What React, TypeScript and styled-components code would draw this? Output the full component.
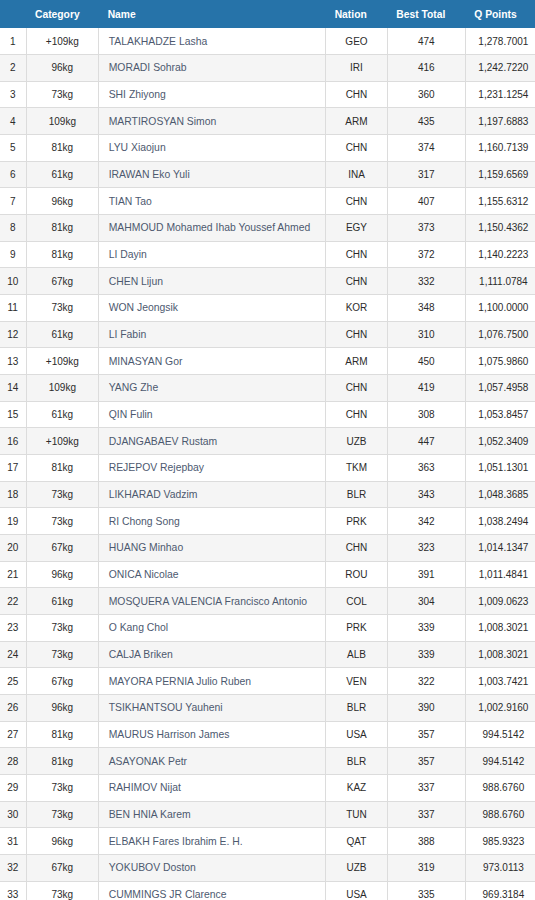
import React from "react";
import styled, { createGlobalStyle } from "styled-components";

const Global = createGlobalStyle`
  html, body { margin: 0; padding: 0; overflow: hidden; background: #fff; }
  body { font-family: "Liberation Sans", Arial, sans-serif; }
`;

const Frame = styled.div`
  width: 535px;
  height: 900px;
  overflow: hidden;
`;

const Table = styled.table`
  width: 541px;
  table-layout: fixed;
  border-collapse: collapse;
  border-spacing: 0;
`;

const HeadRow = styled.tr`
  height: 28px;
  background: #2673a9;
`;

const Th = styled.th`
  padding: 0 0 0 9px;
  text-align: left;
  color: #fff;
  font-size: 10.3px;
  font-weight: bold;
  vertical-align: middle;
  white-space: nowrap;
`;

const Row = styled.tr<{ $alt: boolean }>`
  height: 26.667px;
  background: ${(p) => (p.$alt ? "#f5f5f5" : "#ffffff")};
  border-bottom: 1px solid #dcdcdc;
`;

const Td = styled.td<{ $align?: "left" | "center"; $name?: boolean }>`
  padding: 0;
  padding-left: ${(p) => (p.$align === "left" ? "9.5px" : "0")};
  text-align: ${(p) => p.$align ?? "center"};
  color: ${(p) => (p.$name ? "#4d596f" : "#2b2b2b")};
  font-size: ${(p) => (p.$name ? "10.4px" : "10px")};
  vertical-align: middle;
  white-space: nowrap;
  overflow: hidden;
  border-right: 1px solid #dcdcdc;
  &:last-child { border-right: none; }
`;

type R = [string, string, string, string, string];

const data: R[] = [
  ["+109kg", "TALAKHADZE Lasha", "GEO", "474", "1,278.7001"],
  ["96kg", "MORADI Sohrab", "IRI", "416", "1,242.7220"],
  ["73kg", "SHI Zhiyong", "CHN", "360", "1,231.1254"],
  ["109kg", "MARTIROSYAN Simon", "ARM", "435", "1,197.6883"],
  ["81kg", "LYU Xiaojun", "CHN", "374", "1,160.7139"],
  ["61kg", "IRAWAN Eko Yuli", "INA", "317", "1,159.6569"],
  ["96kg", "TIAN Tao", "CHN", "407", "1,155.6312"],
  ["81kg", "MAHMOUD Mohamed Ihab Youssef Ahmed", "EGY", "373", "1,150.4362"],
  ["81kg", "LI Dayin", "CHN", "372", "1,140.2223"],
  ["67kg", "CHEN Lijun", "CHN", "332", "1,111.0784"],
  ["73kg", "WON Jeongsik", "KOR", "348", "1,100.0000"],
  ["61kg", "LI Fabin", "CHN", "310", "1,076.7500"],
  ["+109kg", "MINASYAN Gor", "ARM", "450", "1,075.9860"],
  ["109kg", "YANG Zhe", "CHN", "419", "1,057.4958"],
  ["61kg", "QIN Fulin", "CHN", "308", "1,053.8457"],
  ["+109kg", "DJANGABAEV Rustam", "UZB", "447", "1,052.3409"],
  ["81kg", "REJEPOV Rejepbay", "TKM", "363", "1,051.1301"],
  ["73kg", "LIKHARAD Vadzim", "BLR", "343", "1,048.3685"],
  ["73kg", "RI Chong Song", "PRK", "342", "1,038.2494"],
  ["67kg", "HUANG Minhao", "CHN", "323", "1,014.1347"],
  ["96kg", "ONICA Nicolae", "ROU", "391", "1,011.4841"],
  ["61kg", "MOSQUERA VALENCIA Francisco Antonio", "COL", "304", "1,009.0623"],
  ["73kg", "O Kang Chol", "PRK", "339", "1,008.3021"],
  ["73kg", "CALJA Briken", "ALB", "339", "1,008.3021"],
  ["67kg", "MAYORA PERNIA Julio Ruben", "VEN", "322", "1,003.7421"],
  ["96kg", "TSIKHANTSOU Yauheni", "BLR", "390", "1,002.9160"],
  ["81kg", "MAURUS Harrison James", "USA", "357", "994.5142"],
  ["81kg", "ASAYONAK Petr", "BLR", "357", "994.5142"],
  ["73kg", "RAHIMOV Nijat", "KAZ", "337", "988.6760"],
  ["73kg", "BEN HNIA Karem", "TUN", "337", "988.6760"],
  ["96kg", "ELBAKH Fares Ibrahim E. H.", "QAT", "388", "985.9323"],
  ["67kg", "YOKUBOV Doston", "UZB", "319", "973.0113"],
  ["73kg", "CUMMINGS JR Clarence", "USA", "335", "969.3184"],
];

export default function App() {
  return (
    <Frame>
      <Global />
      <Table>
        <colgroup>
          <col style={{ width: 26 }} />
          <col style={{ width: 72.7 }} />
          <col style={{ width: 227 }} />
          <col style={{ width: 61.6 }} />
          <col style={{ width: 78 }} />
          <col style={{ width: 75.7 }} />
        </colgroup>
        <thead>
          <HeadRow>
            <Th />
            <Th>Category</Th>
            <Th>Name</Th>
            <Th>Nation</Th>
            <Th>Best Total</Th>
            <Th>Q Points</Th>
          </HeadRow>
        </thead>
        <tbody>
          {data.map((r, i) => (
            <Row key={i} $alt={i % 2 === 1}>
              <Td>{i + 1}</Td>
              <Td>{r[0]}</Td>
              <Td $align="left" $name>
                {r[1]}
              </Td>
              <Td>{r[2]}</Td>
              <Td>{r[3]}</Td>
              <Td>{r[4]}</Td>
            </Row>
          ))}
        </tbody>
      </Table>
    </Frame>
  );
}
